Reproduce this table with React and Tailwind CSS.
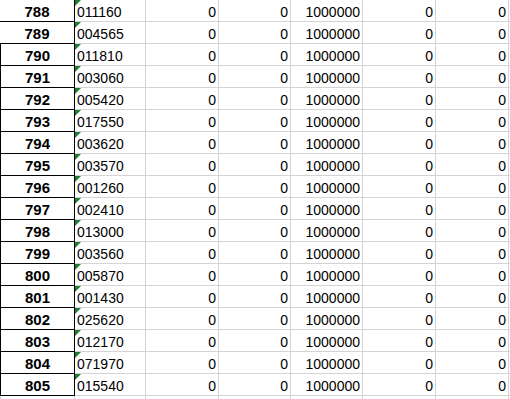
const rows = [
  ['788', '011160'],
  ['789', '004565'],
  ['790', '011810'],
  ['791', '003060'],
  ['792', '005420'],
  ['793', '017550'],
  ['794', '003620'],
  ['795', '003570'],
  ['796', '001260'],
  ['797', '002410'],
  ['798', '013000'],
  ['799', '003560'],
  ['800', '005870'],
  ['801', '001430'],
  ['802', '025620'],
  ['803', '012170'],
  ['804', '071970'],
  ['805', '015540'],
]

const cols = 'grid grid-cols-[75px_71px_73px_72px_72px_73px_73px_1fr]'
const num = 'h-[22px] border-r border-b border-[#d4d4d4] pr-[2px] pt-[3px] text-right leading-[18px]'

function Row({ id, code, idx }) {
  return (
    <div className={cols}>
      <div
        className={`h-[22px] border-r border-b border-black pt-[3px] text-center text-[15px] font-bold leading-[18px] ${
          idx > 1 ? 'border-l' : ''
        }`}
      >
        {id}
      </div>
      <div className="relative h-[22px] border-r border-b border-[#d4d4d4] pl-[2px] pt-[3px] leading-[18px]">
        <span className="absolute left-0 top-0 h-0 w-0 border-t-[6px] border-r-[6px] border-t-[#1e7b34] border-r-transparent" />
        {code}
      </div>
      <div className={num}>0</div>
      <div className={num}>0</div>
      <div className={num}>1000000</div>
      <div className={num}>0</div>
      <div className={num}>0</div>
      <div className="h-[22px] border-b border-[#d4d4d4]" />
    </div>
  )
}

export default function App() {
  return (
    <div className="h-[399px] w-[510px] overflow-hidden bg-white font-['Liberation_Sans',Arial,sans-serif] text-[14px] text-black">
      {rows.map(([id, code], idx) => (
        <Row key={id} id={id} code={code} idx={idx} />
      ))}
      <div className={cols}>
        <div className="h-[22px] border-r border-l border-[#d4d4d4]" />
        <div className="h-[22px] border-r border-[#d4d4d4]" />
        <div className="h-[22px] border-r border-[#d4d4d4]" />
        <div className="h-[22px] border-r border-[#d4d4d4]" />
        <div className="h-[22px] border-r border-[#d4d4d4]" />
        <div className="h-[22px] border-r border-[#d4d4d4]" />
        <div className="h-[22px] border-r border-[#d4d4d4]" />
        <div className="h-[22px]" />
      </div>
    </div>
  )
}
